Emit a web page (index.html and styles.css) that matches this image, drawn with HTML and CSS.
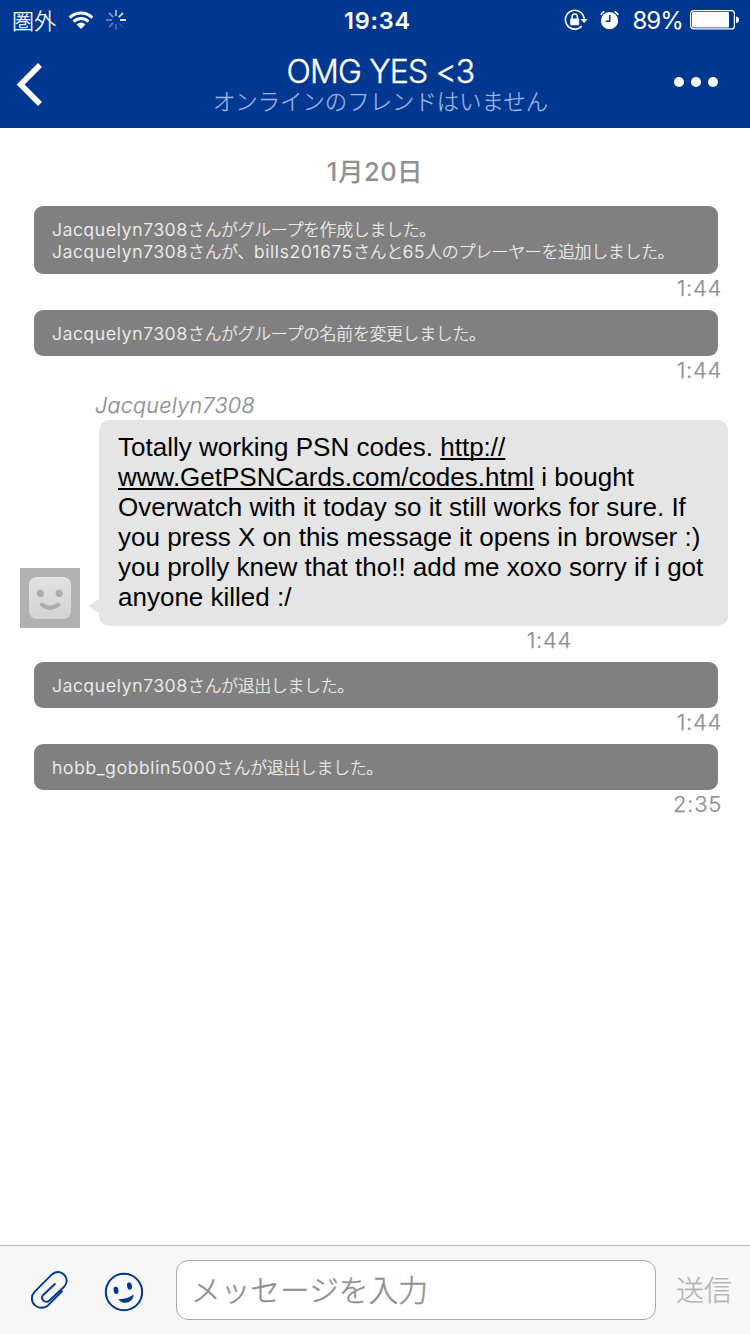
FILE: index.html
```html
<!DOCTYPE html>
<html lang="ja">
<head>
<meta charset="utf-8">
<title>OMG YES &lt;3</title>
<link rel="stylesheet" href="styles.css">
</head>
<body>
<div class="screen">
  <header class="header">
    <div class="status">
      <div class="status-left">
        <span class="carrier">圏外</span>
        <svg class="wifi" width="26" height="20" viewBox="0 0 26 20" fill="none" stroke="#fff" stroke-width="2.9">
          <path d="M1.7 7.6a16 16 0 0 1 22.6 0"/>
          <path d="M5.6 11.6a10.5 10.5 0 0 1 14.8 0"/>
          <path d="M13 19l-4.4-4.6a6.2 6.2 0 0 1 8.8 0z" fill="#fff" stroke="none"/>
        </svg>
        <svg class="spinner" width="20" height="20" viewBox="0 0 20 20" stroke="#fff" stroke-width="1.7">
          <path d="M10 0v6" opacity=".65"/>
          <path d="M12.8 7.2l4.3-4.3" opacity=".85"/>
          <path d="M14 10h6"/>
          <path d="M12.8 12.8l4.3 4.3" opacity=".12"/>
          <path d="M10 14v6" opacity=".25"/>
          <path d="M7.2 12.8l-4.3 4.3" opacity=".35"/>
          <path d="M6 10H0" opacity=".42"/>
          <path d="M7.2 7.2L2.9 2.9" opacity=".5"/>
        </svg>
      </div>
      <span class="clock">19:34</span>
      <div class="status-right">
        <svg class="lock" width="24" height="22" viewBox="0 0 24 22" fill="none" stroke="#fff">
          <path d="M20.2 10.4A9.4 9.4 0 1 0 17.8 17" stroke-width="1.6"/>
          <path d="M16.4 10h7.400l-3.700 4z" fill="#fff" stroke="none"/>
          <rect x="6.200" y="9.400" width="9" height="6.800" rx=".8" fill="#fff" stroke="none"/>
          <path d="M8 10V7.700a2.700 2.700 0 0 1 5.400 0V10" stroke-width="1.500"/>
        </svg>
        <svg class="alarm" width="20" height="20" viewBox="0 0 20 20" fill="none" stroke="#fff">
          <circle cx="9.500" cy="10.700" r="8.600" fill="#fff" stroke="none"/>
          <path d="M.8 5A7 7 0 0 1 4.400 1.500M18.200 5a7 7 0 0 0-3.600-3.500" stroke-width="1.600"/>
          <path d="M9.700 5v6.200H5.600" stroke="#003791" stroke-width="1.500"/>
        </svg>
        <span class="percent">89%</span>
        <svg class="battery" width="49" height="20" viewBox="0 0 49 20" fill="#fff">
          <rect x=".6" y=".6" width="43.800" height="18.300" rx="3" fill="none" stroke="#fff" stroke-width="1.200"/>
          <rect x="2" y="2" width="37" height="15.500" rx="1"/>
          <path d="M46 6.500q3 .5 3 3.300t-3 3.300z"/>
        </svg>
      </div>
    </div>
    <nav class="nav">
      <svg class="back" width="28" height="44" viewBox="0 0 28 44" fill="none" stroke="#fff" stroke-width="5.600">
        <path d="M25 3L5.600 22.500L25 42"/>
      </svg>
      <div class="titles">
        <h1 class="title">OMG YES &lt;3</h1>
        <p class="subtitle">オンラインのフレンドはいません</p>
      </div>
      <div class="more"><i class="dot"></i><i class="dot"></i><i class="dot"></i></div>
    </nav>
  </header>

  <main class="thread">
    <h2 class="date">1月20日</h2>

    <section class="event tall"><p><span class="id">Jacquelyn7308</span>さんがグループを作成しました。</p><p><span class="id">Jacquelyn7308</span>さんが、<span class="id">bills201675</span>さんと<span class="id">65</span>人のプレーヤーを追加しました。</p></section>
    <time class="time">1:44</time>
    <section class="event"><p><span class="id">Jacquelyn7308</span>さんがグループの名前を変更しました。</p></section>
    <time class="time">1:44</time>

    <p class="sender">Jacquelyn7308</p>
    <article class="message">
      <svg class="avatar" width="60" height="60" viewBox="0 0 60 60">
        <defs><linearGradient id="face" x1="0" y1="0" x2="0" y2="1"><stop offset="0" stop-color="#e1e1e3"/><stop offset="1" stop-color="#d3d3d5"/></linearGradient></defs>
        <rect width="60" height="60" fill="#b1b1b1"/>
        <rect x="9" y="9" width="42" height="42" rx="7.500" fill="url(#face)"/>
        <circle cx="20.400" cy="25.300" r="3.600" fill="#adadae"/>
        <circle cx="39.200" cy="25.300" r="3.600" fill="#adadae"/>
        <path d="M22 36.800q8 6 16 0" fill="none" stroke="#adadae" stroke-width="4.400" stroke-linecap="round"/>
      </svg>
      <svg class="tail" width="11" height="14" viewBox="0 0 11 14"><path d="M11 0v14L0 7z" fill="#e5e5e5"/></svg>
      <div class="bubble">
        <p>Totally working PSN codes. <a class="link">http://</a></p>
        <p><a class="link">www.GetPSNCards.com/codes.html</a> i bought</p>
        <p>Overwatch with it today so it still works for sure. If</p>
        <p>you press X on this message it opens in browser :)</p>
        <p>you prolly knew that tho!! add me xoxo sorry if i got</p>
        <p>anyone killed :/</p>
      </div>
    </article>
    <time class="time message-time">1:44</time>

    <section class="event"><p><span class="id">Jacquelyn7308</span>さんが退出しました。</p></section>
    <time class="time">1:44</time>
    <section class="event"><p><span class="id">hobb_gobblin5000</span>さんが退出しました。</p></section>
    <time class="time">2:35</time>
  </main>

  <footer class="composer">
    <svg class="clip" width="40" height="40" viewBox="0 0 40 40" fill="none" stroke="#00378f" stroke-width="1.900" stroke-linecap="round" stroke-linejoin="round">
      <path d="M32 21.400L18.300 35.100C15 38.400 9 38.900 5.100 35.400C.7 31.500 1.100 25.200 4.500 21.800L21.700 4.700C24.900 1.500 30.200.8 34 4.500C37.800 8.200 37.400 13.500 34.100 16.800L19.500 30.500C17.600 32.300 14.800 32.300 13.200 30.400C11.500 28.500 11.900 26.300 13.500 24.700L24.900 14"/>
    </svg>
    <svg class="smile" width="40" height="40" viewBox="0 0 40 40" fill="#00378f">
      <circle cx="20" cy="20" r="18.200" fill="none" stroke="#00378f" stroke-width="2"/>
      <ellipse cx="12" cy="18.300" rx="2.400" ry="3.700" transform="rotate(-12 12 18.300)"/>
      <ellipse cx="25.500" cy="14" rx="2.400" ry="3.700" transform="rotate(-12 25.500 14)"/>
      <path d="M14.200 27.200Q22.500 27.800 29.600 22.600C29.100 31.600 18.600 33.300 14.200 27.200z"/>
    </svg>
    <div class="field">メッセージを入力</div>
    <span class="send">送信</span>
  </footer>
</div>
</body>
</html>
```
FILE: styles.css
```css
* { box-sizing: border-box; }
body, h1, h2, p { margin: 0; }
h1, h2 { font-weight: 400; }
svg { display: block; flex: none; }

.screen {
  width: 750px;
  height: 1334px;
  display: flex;
  flex-direction: column;
  background: #fff;
  font-family: Inter, "Noto Sans CJK JP", sans-serif;
  white-space: nowrap;
  overflow: hidden;
}

.header { height: 128px; flex: none; background: #003791; color: #fff; }
.status {
  height: 40px;
  display: grid;
  grid-template-columns: 1fr auto 1fr;
  align-items: center;
  padding: 0 11px 0 12px;
}
.status-left, .status-right { display: flex; align-items: center; }
.status-right { justify-content: flex-end; }
.carrier { font-size: 22px; line-height: 42px; height: 40px; font-weight: 300; -webkit-text-stroke: .25px; }
.wifi { margin-left: 12px; }
.spinner { margin-left: 12px; }
.clock { height: 40px; padding-left: 4px; font-size: 23.5px; font-weight: 600; line-height: 42px; letter-spacing: .8px; }
.alarm { margin-left: 12px; }
.percent { height: 40px; margin-left: 12px; font-size: 24px; line-height: 42px; letter-spacing: -.9px; font-weight: 400; }
.battery { margin-left: 7px; }

.nav {
  height: 88px;
  display: grid;
  grid-template-columns: 100px 1fr 100px;
  align-items: center;
  padding: 0 32px 0 15px;
}
.titles { text-align: center; padding-left: 28px; height: 88px; }
.title { font-size: 32px; line-height: 40px; height: 50px; padding-top: 12px; letter-spacing: -.8px; font-weight: 300; -webkit-text-stroke: .4px; }
.subtitle { font-size: 22.4px; line-height: 24px; color: #9fb6e3; font-weight: 300; -webkit-text-stroke: .25px; }
.more { display: flex; gap: 7px; justify-content: flex-end; padding-bottom: 4px; }
.dot { width: 10px; height: 10px; border-radius: 50%; background: #fff; }

.thread { flex: 1; display: flex; flex-direction: column; color: #909090; }
.date { height: 78px; padding: 24px 0 0; font-size: 25.5px; letter-spacing: .5px; line-height: 40px; font-weight: 500; text-align: center; }
.event {
  height: 46px;
  width: 684px;
  margin-left: 34px;
  padding: 13px 18px 0;
  border-radius: 9px;
  background: #808080;
  color: #f2f2f2;
  font-size: 17px;
  letter-spacing: -.4px;
  line-height: 22px;
  font-weight: 300;
  -webkit-text-stroke: .2px;
}
.event.tall { height: 68px; line-height: 21px; }
.id { font-size: 17.5px; letter-spacing: .75px; }
.time { height: 36px; padding: 0 28px 6px 0; font-size: 22px; line-height: 28px; text-align: right; font-weight: 300; -webkit-text-stroke: .25px; letter-spacing: .7px; }
.sender { height: 28px; padding-left: 95px; font-size: 21.5px; letter-spacing: .3px; line-height: 26px; font-style: italic; font-weight: 300; -webkit-text-stroke: .25px; }

.message { display: flex; height: 206px; padding-left: 20px; align-items: flex-end; }
.avatar { margin-bottom: -2px; }
.tail { margin: 0 0 13px 8px; }
.bubble {
  width: 629px;
  height: 206px;
  padding: 12px 19px;
  border-radius: 10px;
  background: #e5e5e5;
  color: #000;
  font-family: "Liberation Sans", Arial, sans-serif;
  font-size: 26px;
  line-height: 30px;
}
.link { text-decoration: underline; text-decoration-thickness: 2px; text-underline-offset: 2px; text-decoration-skip-ink: none; }
.message-time { padding-right: 178px; }

.composer {
  height: 89px;
  flex: none;
  display: flex;
  align-items: center;
  padding: 0 0 0 30px;
  border-top: 1px solid #b2b2b2;
  background: #f7f7f8;
}
.smile { margin: 4px 0 0 34px; }
.clip { margin-bottom: 1px; }
.field {
  width: 480px;
  height: 60px;
  margin-left: 32px;
  padding-left: 14px;
  border: 1px solid #a9a9a9;
  border-radius: 12px;
  background: #fff;
  color: #8e8e8e;
  font-size: 29.7px;
  font-weight: 300;
  -webkit-text-stroke: .4px;
  line-height: 58px;
}
.send { margin-left: 20px; color: #b4b4b6; font-size: 28px; font-weight: 300; -webkit-text-stroke: .25px; line-height: 60px; padding-top: 1px; }
```
